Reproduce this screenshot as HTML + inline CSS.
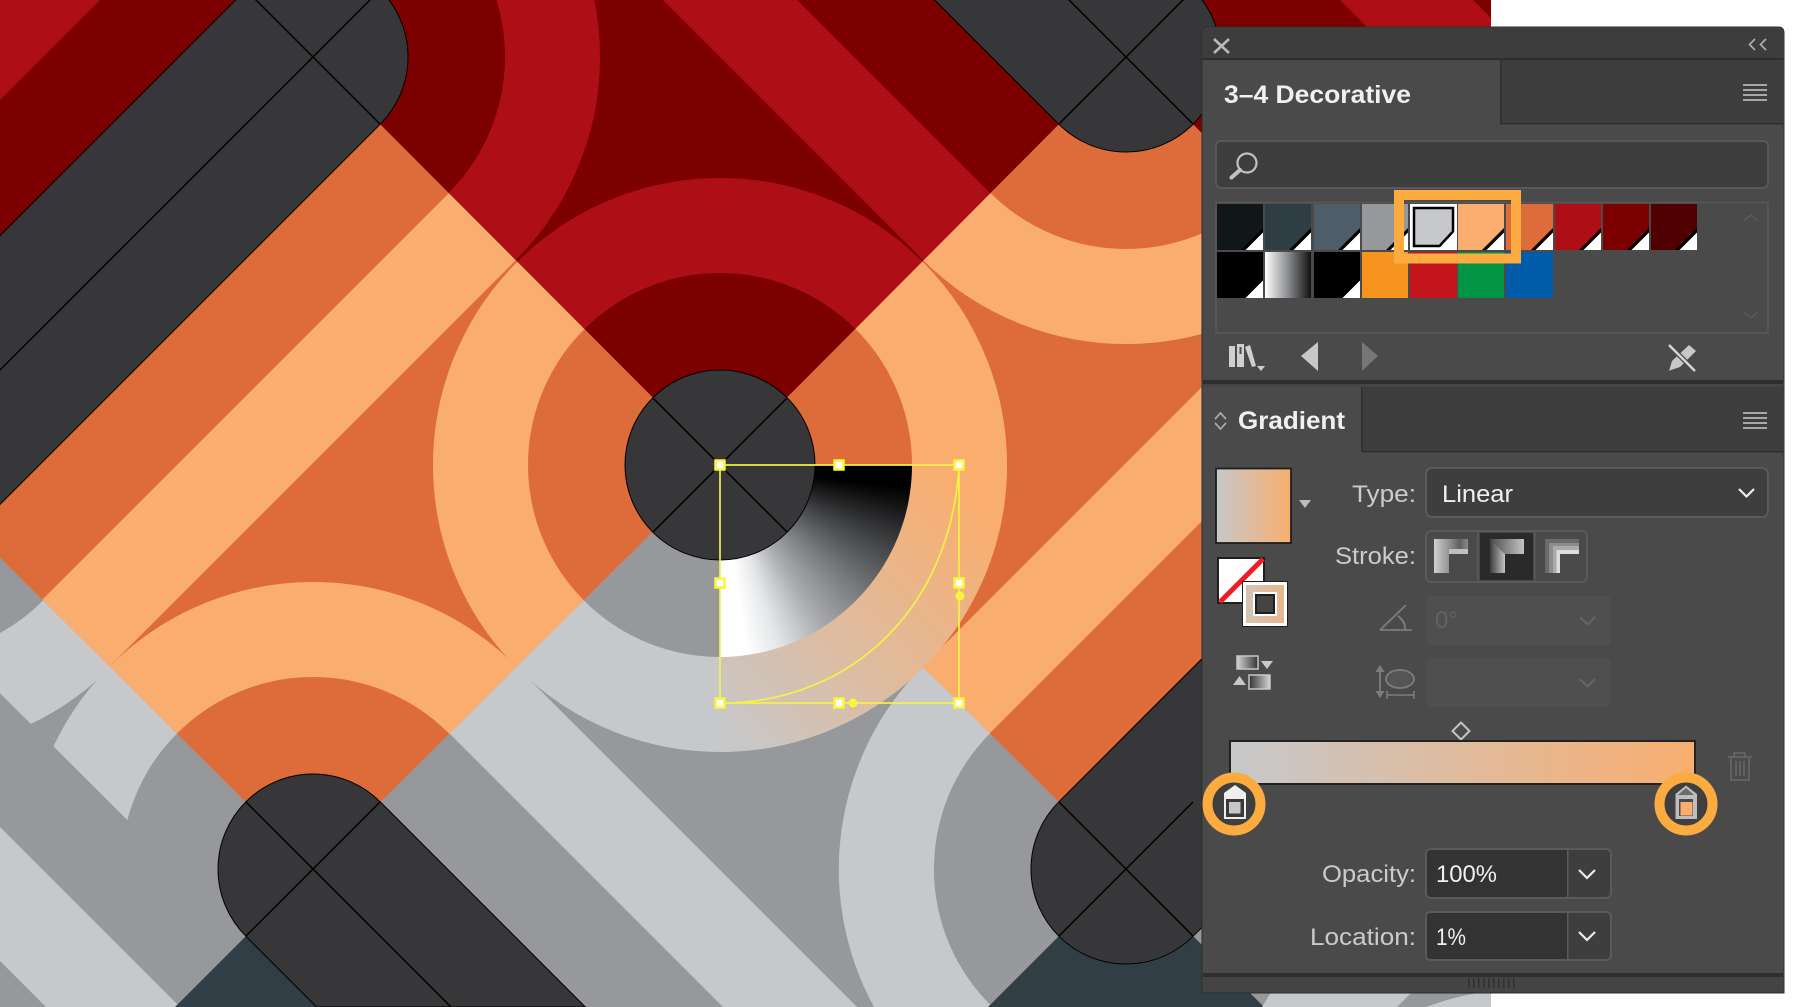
<!DOCTYPE html>
<html>
<head>
<meta charset="utf-8">
<title>Gradient panel</title>
<style>
html,body{margin:0;padding:0;background:#fff;width:1800px;height:1007px;overflow:hidden}
svg{position:absolute;left:0;top:0;display:block}
#sector{position:absolute;left:720px;top:465px;width:192px;height:192px;
background:conic-gradient(from 90deg at 0 0,#000 0deg,#000 7deg,#3c3d3f 24deg,#77797c 42deg,#a9abae 58deg,#e4e6e8 72deg,#fff 82deg,#fff 90deg);
clip-path:circle(192px at 0 0)}
text{font-family:"Liberation Sans",sans-serif}
</style>
</head>
<body>
<svg width="1491" height="1007" viewBox="0 0 1491 1007" style="background:#96989b">
<defs>
<clipPath id="cTop"><polygon points="313,57 720,465 1126,57 720,-349"/></clipPath>
<clipPath id="cLeft"><polygon points="313,57 720,465 313,869 -93,465"/></clipPath>
<clipPath id="cRight"><polygon points="1126,57 720,465 1126,869 1532,465"/></clipPath>
<clipPath id="cBot"><polygon points="720,465 1126,869 988,1007 451,1007 313,869"/></clipPath>
<clipPath id="cBL"><polygon points="-93,465 313,869 245,937 -161,533"/></clipPath>
<clipPath id="cQuad"><rect x="720" y="465" width="400" height="400"/></clipPath>
<linearGradient id="ringG" gradientUnits="userSpaceOnUse" x1="725" y1="750" x2="985" y2="520">
<stop offset="0" stop-color="#c6c8cb"/><stop offset="1" stop-color="#f9ae6f"/></linearGradient>
</defs>
<!-- red zone -->
<polygon points="-93,465 313,57 720,465 1126,57 1532,465 1532,-400 -93,-400" fill="#7c0000"/>
<polygon points="0,0 100,0 0,100" fill="#ae0e16"/>
<polygon points="1340,0 1473,0 1500,27 1500,30 1370,30" fill="#ae0e16"/>
<g clip-path="url(#cTop)" fill="none" stroke="#ae0e16" stroke-width="95">
<circle cx="720" cy="465" r="239.5"/>
<circle cx="313" cy="57" r="239.5"/>
</g>
<g clip-path="url(#cTop)"><polygon points="263,-400 397,-400 1397,600 1263,600" fill="#ae0e16"/></g>
<!-- left orange -->
<polygon points="313,57 720,465 313,869 -93,465" fill="#de6c3b"/>
<g clip-path="url(#cLeft)">
<g fill="none" stroke="#f9ae6f" stroke-width="95">
<circle cx="720" cy="465" r="239.5"/>
<path d="M73.500 869A239.500 239.500 0 0 1 552.500 869"/>
</g>
<polygon points="742,-100 876,-100 -124,900 -258,900" fill="#f9ae6f"/>
</g>
<!-- right orange -->
<polygon points="1126,57 720,465 1126,869 1532,465" fill="#de6c3b"/>
<g clip-path="url(#cRight)">
<g fill="none" stroke="#f9ae6f" stroke-width="95">
<circle cx="720" cy="465" r="239.5"/>
<circle cx="1126" cy="57" r="239.5"/>
</g>
<polygon points="1689,-100 1823,-100 823,900 689,900" fill="#f9ae6f"/>
</g>
<!-- bottom gray -->
<g clip-path="url(#cBot)">
<circle cx="720" cy="465" r="239.5" fill="none" stroke="#c6c8cb" stroke-width="95"/>
<path d="M923.100 666.100A287 287 0 0 0 874 1007L992.500 1007A192 192 0 0 1 990.200 733.200Z" fill="#c6c8cb"/>
<polygon points="216,500 350,500 857,1007 723,1007" fill="#c6c8cb"/>
</g>
<!-- bottom-left gray tile -->
<g clip-path="url(#cBL)" fill="none" stroke="#c6c8cb" stroke-width="95">
<circle cx="-93" cy="465" r="239.5"/>
<path d="M73.500 869A239.500 239.500 0 0 1 552.500 869"/>
</g>
<polygon points="0,827 180,1007 46,1007 0,961" fill="#c6c8cb"/>
<!-- teal -->
<polygon points="313,869 175,1007 451,1007" fill="#313e45"/>
<polygon points="1126,869 988,1007 1264,1007" fill="#313e45"/>
<!-- bottom right tile -->
<polygon points="1262,1007 1268,997 1271,993 1414,990 1397,1007" fill="#c6c8cb"/>
<path d="M1426 1007A287 287 0 0 1 1491 991L1491 1007Z" fill="#c6c8cb"/>
<!-- gradient ring -->
<g clip-path="url(#cQuad)"><circle cx="720" cy="465" r="239.5" fill="none" stroke="url(#ringG)" stroke-width="95"/></g>
</svg>
<div id="sector"></div>
<svg width="1800" height="1007" viewBox="0 0 1800 1007">
<defs>
<linearGradient id="pg" x1="0" x2="1" y1="0" y2="0"><stop offset="0" stop-color="#c6c8cb"/><stop offset="1" stop-color="#f9ae6f"/></linearGradient>
<linearGradient id="pb" x1="0" x2="1" y1="0" y2="0"><stop offset="0" stop-color="#d3c5b8"/><stop offset="1" stop-color="#e8b78c"/></linearGradient>
<linearGradient id="wb" x1="0" x2="1" y1="0" y2="0"><stop offset="0" stop-color="#fff"/><stop offset=".5" stop-color="#8a8c8f"/><stop offset="1" stop-color="#111"/></linearGradient>
<linearGradient id="ic1" x1="0" x2="1" y1="0" y2="0"><stop offset="0" stop-color="#cfcfcf"/><stop offset=".4" stop-color="#989898"/><stop offset=".75" stop-color="#606060"/><stop offset="1" stop-color="#8a8a8a"/></linearGradient>
<linearGradient id="ic2a" x1="0" x2="1" y1="0" y2="0"><stop offset="0" stop-color="#3c3c3c"/><stop offset="1" stop-color="#c4c4c4"/></linearGradient>
<linearGradient id="ic2b" x1="0" x2="1" y1="0" y2="0"><stop offset="0" stop-color="#4a4a4a"/><stop offset="1" stop-color="#c4c4c4"/></linearGradient>
<linearGradient id="rv" x1="0" x2="1" y1="0" y2="0"><stop offset="0" stop-color="#d5d5d5"/><stop offset="1" stop-color="#333"/></linearGradient>
<linearGradient id="rv2" x1="0" x2="1" y1="0" y2="0"><stop offset="0" stop-color="#333"/><stop offset="1" stop-color="#d5d5d5"/></linearGradient>
<g id="cn"><path d="M-22 0L0-22V0Z" fill="#000"/><path d="M-17.500 0L0-17.500V0Z" fill="#fff"/></g>
<g id="ham" fill="#a8a8a8"><rect x="0" y="0" width="24" height="2"/><rect x="0" y="5" width="24" height="2"/><rect x="0" y="10" width="24" height="2"/><rect x="0" y="15" width="24" height="2"/></g>
</defs>

<!-- capsules -->
<g fill="#373739" stroke="#000" stroke-width="1">
<path d="M245.820-10.180A95 95 0 0 1 380.180 124.180L-220 724.360L-354.360 590Z"/>
<path d="M1058.820 124.180A95 95 0 0 0 1193.180-10.180L893-310.360L758.640-176Z"/>
<path d="M380.180 801.820A95 95 0 0 0 245.820 936.180L316.640 1007L585.360 1007Z"/>
<path d="M1058.820 801.820A95 95 0 0 0 1193.180 936.180L1493.360 636L1359 501.640Z"/>
<circle cx="720" cy="465" r="95"/>
</g>
<g stroke="#000" stroke-width="1.500" fill="none">
<path d="M653 398L787 532M787 398L653 532"/>
<path d="M246-10L380 124M380-10L-20 390"/>
<path d="M1059 124L1193-10M1193 124L1059-10"/>
<path d="M380 802L246 936M246 802L451 1007"/>
<path d="M1059 802L1193 936M1059 936L1193 802"/>
</g>

<!-- selection -->
<g fill="none" stroke="#f5f246" stroke-width="1.700">
<rect x="720" y="465" width="239" height="238"/>
<path d="M959 467C950 610 850 700 728 703"/>
</g>
<g fill="#fff" stroke="#f7f53c" stroke-width="2.500">
<rect x="715.500" y="460.500" width="9" height="9"/><rect x="834.500" y="460.500" width="9" height="9"/><rect x="954.500" y="460.500" width="9" height="9"/>
<rect x="715.500" y="578.500" width="9" height="9"/><rect x="954.500" y="578.500" width="9" height="9"/>
<rect x="715.500" y="698.500" width="9" height="9"/><rect x="834.500" y="698.500" width="9" height="9"/><rect x="954.500" y="698.500" width="9" height="9"/>
</g>
<circle cx="960" cy="596" r="4.500" fill="#f7f53c"/><circle cx="853" cy="703" r="4.500" fill="#f7f53c"/>

<!-- panel -->
<path d="M1208 27H1778Q1784 27 1784 33V993H1202V33Q1202 27 1208 27Z" fill="#4a4a4a" stroke="#2c2c2c" stroke-width="1"/>
<path d="M1208 28H1778Q1783 28 1783 33V59H1203V33Q1203 28 1208 28Z" fill="#3d3d3d"/>
<rect x="1203" y="58" width="580" height="2" fill="#2e2e2e"/>
<rect x="1500" y="60" width="283" height="64" fill="#3d3d3d"/>
<rect x="1500" y="60" width="1.500" height="64" fill="#2e2e2e"/>
<rect x="1500" y="123" width="283" height="1.500" fill="#2e2e2e"/>
<path d="M1214 39L1229 53M1229 39L1214 53" stroke="#b9b9b9" stroke-width="2.600" fill="none"/>
<path d="M1755 39L1749.500 44.500L1755 50M1766 39L1760.500 44.500L1766 50" stroke="#b0b0b0" stroke-width="1.600" fill="none"/>
<text x="1224" y="103" font-size="25" font-weight="700" fill="#f0f0f0" textLength="187" lengthAdjust="spacingAndGlyphs">3–4 Decorative</text>
<use href="#ham" x="1743" y="84"/>

<!-- search -->
<rect x="1216" y="141" width="552" height="47" rx="5" fill="#3e3e3e" stroke="#585858" stroke-width="2"/>
<circle cx="1247" cy="163" r="9.500" fill="none" stroke="#c2c2c2" stroke-width="2.200"/>
<path d="M1240 170L1231.500 177.500" stroke="#c2c2c2" stroke-width="4" stroke-linecap="round"/>

<!-- swatches -->
<rect x="1216" y="202.500" width="552" height="130.500" fill="none" stroke="#575757" stroke-width="1.500"/>
<path d="M1744 221L1751 215L1758 221M1744 312L1751 318L1758 312" fill="none" stroke="#5a5a5a" stroke-width="1.500"/>
<g>
<rect x="1217" y="204" width="46" height="46" fill="#111619"/><use href="#cn" x="1263" y="250"/>
<rect x="1265" y="204" width="46" height="46" fill="#2f3d44"/><use href="#cn" x="1311" y="250"/>
<rect x="1314" y="204" width="46" height="46" fill="#4f5d68"/><use href="#cn" x="1360" y="250"/>
<rect x="1362" y="204" width="46" height="46" fill="#96989b"/><use href="#cn" x="1408" y="250"/>
<rect x="1410" y="204" width="47" height="46" fill="#fff"/>
<path d="M1414 208H1453V231.500L1439.500 246H1414Z" fill="#c6c8cb" stroke="#000" stroke-width="2.500"/>
<rect x="1458" y="204" width="46" height="46" fill="#f9ae6f"/><use href="#cn" x="1504" y="250"/>
<rect x="1506" y="204" width="47" height="46" fill="#de6c3b"/><use href="#cn" x="1553" y="250"/>
<rect x="1555" y="204" width="46" height="46" fill="#ae0e16"/><use href="#cn" x="1601" y="250"/>
<rect x="1603" y="204" width="46" height="46" fill="#7c0000"/><use href="#cn" x="1649" y="250"/>
<rect x="1651" y="204" width="46" height="46" fill="#500000"/><use href="#cn" x="1697" y="250"/>
<rect x="1217" y="252" width="46" height="46" fill="#000"/><path d="M1263 298h-17.500L1263 280.500Z" fill="#fff"/>
<rect x="1265" y="252" width="46" height="46" fill="url(#wb)"/>
<rect x="1314" y="252" width="46" height="46" fill="#000"/><path d="M1360 298h-17.500L1360 280.500Z" fill="#fff"/>
<rect x="1362" y="252" width="46" height="46" fill="#f7941d"/>
<rect x="1410" y="252" width="47" height="46" fill="#c4161c"/>
<rect x="1458" y="252" width="46" height="46" fill="#009444"/>
<rect x="1506" y="252" width="47" height="46" fill="#005ba8"/>
</g>
<rect x="1399" y="195" width="117" height="63.500" fill="none" stroke="#fbab3f" stroke-width="10"/>

<!-- swatch toolbar -->
<g fill="#cfcfcf">
<rect x="1229" y="346" width="6" height="21"/>
<path d="M1237 344H1244V367H1237ZM1239.500 347V354H1241.500V347Z" fill-rule="evenodd"/>
<path d="M1245 347L1250 345L1256 366L1252 367Z"/>
<path d="M1257 366H1265L1261 371Z"/>
<path d="M1301 356L1318 342V371Z" fill="#c8c8c8"/>
<path d="M1362 342L1378 356L1362 371Z" fill="#767676"/>
</g>
<g>
<path d="M1689 345L1696 351L1680 367L1671 370L1669 371L1672 361Z" fill="#c8c8c8"/>
<path d="M1670 346L1694 370" stroke="#4a4a4a" stroke-width="5"/>
<path d="M1669 345L1695 371" stroke="#d6d6d6" stroke-width="2.400"/>
</g>
<rect x="1203" y="380" width="580" height="4" fill="#2e2e2e"/>
<rect x="1203" y="384" width="580" height="3" fill="#454545"/>

<!-- gradient tab -->
<rect x="1362" y="387" width="421" height="65" fill="#3d3d3d"/>
<rect x="1361" y="387" width="1.500" height="65" fill="#2e2e2e"/>
<rect x="1362" y="451" width="421" height="1.500" fill="#2e2e2e"/>
<path d="M1215 419L1220.500 413L1226 419M1215 423L1220.500 429L1226 423" fill="none" stroke="#aaa" stroke-width="1.700"/>
<text x="1238" y="429" font-size="25" font-weight="700" fill="#f0f0f0" textLength="107" lengthAdjust="spacingAndGlyphs">Gradient</text>
<use href="#ham" x="1743" y="412"/>

<rect x="1216" y="468.500" width="75" height="74.500" fill="url(#pg)" stroke="#1e1e1e" stroke-width="1.800"/>
<path d="M1299 500H1311L1305 508Z" fill="#bdbdbd"/>
<rect x="1218" y="558" width="46" height="45" fill="#fff" stroke="#1e1e1e" stroke-width="2"/>
<path d="M1220 602L1263 559" stroke="#ee1c25" stroke-width="5"/>
<rect x="1243" y="582" width="44" height="44" fill="#1e1e1e" stroke="#1e1e1e" stroke-width="2"/>
<rect x="1244.500" y="583.500" width="41" height="41" fill="url(#pb)" stroke="#fff" stroke-width="3"/>
<rect x="1254.500" y="593.500" width="21" height="21" fill="#444" stroke="#fff" stroke-width="3"/>
<rect x="1256" y="595" width="18" height="18" fill="#444" stroke="#1e1e1e" stroke-width="2"/>
<rect x="1237" y="656" width="21" height="13" fill="url(#rv)" stroke="#c8c8c8" stroke-width="1.500"/>
<path d="M1261 661H1273L1267 669Z" fill="#c8c8c8"/>
<path d="M1233 685H1246L1239.500 676Z" fill="#c8c8c8"/>
<rect x="1249" y="675" width="21" height="14" fill="url(#rv2)" stroke="#c8c8c8" stroke-width="1.500"/>

<g fill="#cbcbcb" font-size="24">
<text x="1352" y="502" textLength="64" lengthAdjust="spacingAndGlyphs">Type:</text>
<text x="1335" y="564" textLength="81" lengthAdjust="spacingAndGlyphs">Stroke:</text>
<text x="1322" y="882" textLength="94" lengthAdjust="spacingAndGlyphs">Opacity:</text>
<text x="1310" y="945" textLength="106" lengthAdjust="spacingAndGlyphs">Location:</text>
</g>

<rect x="1426" y="468" width="342" height="49" rx="6" fill="#3e3e3e" stroke="#5a5a5a" stroke-width="2"/>
<text x="1442" y="502" font-size="24" fill="#f0f0f0" textLength="71" lengthAdjust="spacingAndGlyphs">Linear</text>
<path d="M1739 489L1746.500 496.500L1754 489" fill="none" stroke="#eee" stroke-width="2.200"/>

<!-- stroke buttons -->
<rect x="1426" y="531" width="161" height="51" rx="5" fill="#4a4a4a" stroke="#5a5a5a" stroke-width="2"/>
<rect x="1477" y="532" width="1.500" height="49" fill="#5a5a5a"/><rect x="1534" y="532" width="1.500" height="49" fill="#5a5a5a"/>
<rect x="1480" y="533" width="53" height="47" fill="#2a2a2a"/>
<path d="M1434 539H1468V554H1449V573H1434Z" fill="url(#ic1)"/>
<path d="M1449 549H1468V554H1449Z" fill="#c0c0c0"/>
<path d="M1490 539L1505 554V573H1490Z" fill="url(#ic2a)"/>
<path d="M1490 539H1524V554H1505Z" fill="url(#ic2b)"/>
<path d="M1545 539H1579V554H1560V573H1545Z" fill="#6a6a6a"/>
<path d="M1549 543H1579V554H1560V573H1549Z" fill="#8c8c8c"/>
<path d="M1553 546H1579V554H1560V573H1553Z" fill="#aaa"/>
<path d="M1556.500 550H1579V554H1560V573H1556.500Z" fill="#ddd"/>

<!-- disabled -->
<rect x="1426" y="596" width="185" height="49" rx="5" fill="#4f4f4f"/>
<rect x="1426" y="658" width="185" height="49" rx="5" fill="#4f4f4f"/>
<text x="1435" y="628" font-size="24" fill="#626262" textLength="23" lengthAdjust="spacingAndGlyphs">0°</text>
<path d="M1580 617L1587.500 624.500L1595 617M1580 679L1587.500 686.500L1595 679" fill="none" stroke="#686868" stroke-width="1.800"/>
<path d="M1380 630H1412M1380 630L1406 605M1398 616Q1406 622 1405 630" fill="none" stroke="#7d7d7d" stroke-width="1.800"/>
<ellipse cx="1400" cy="679" rx="14" ry="9" fill="#555" stroke="#7d7d7d" stroke-width="1.800"/>
<path d="M1380 670V693" stroke="#7d7d7d" stroke-width="1.800"/>
<path d="M1375.500 672L1380 665L1384.500 672ZM1375.500 691L1380 698L1384.500 691Z" fill="#7d7d7d"/>
<path d="M1387 695H1414M1387 691V699M1414 691V699" stroke="#7d7d7d" stroke-width="1.500" fill="none"/>

<!-- slider -->
<path d="M1461 722.500L1469.500 731L1461 739.500L1452.500 731Z" fill="none" stroke="#c4c4c4" stroke-width="2"/>
<rect x="1230" y="741" width="465" height="43" fill="url(#pg)" stroke="#222" stroke-width="2"/>
<g fill="none" stroke="#696969" stroke-width="1.500">
<path d="M1728 757H1752M1734 757V753H1745V757M1731 758V780H1749V758M1736 761V776M1740 761V776M1744 761V776"/>
</g>
<circle cx="1234" cy="804" r="26.500" fill="#3f3f3f" stroke="#fbab3f" stroke-width="10"/>
<circle cx="1686" cy="804" r="26.500" fill="#3f3f3f" stroke="#fbab3f" stroke-width="10"/>
<path d="M1235 785L1246 793V819H1224V793Z" fill="#efefef"/>
<rect x="1226" y="799" width="18" height="18" fill="#3a3a3a"/>
<rect x="1229" y="802" width="11.500" height="11.500" fill="#c6c8cb"/>
<path d="M1686 785.500L1697 794V819H1675.500V794Z" fill="#bdbdbd"/>
<path d="M1686 788L1694 795H1678Z" fill="#6a6a6a"/>
<rect x="1679" y="799" width="14" height="17" fill="#4a4a4a"/>
<rect x="1680.500" y="802" width="12" height="13.500" fill="#f9ae6f"/>

<!-- fields -->
<rect x="1426" y="849" width="185" height="49" rx="5" fill="#3e3e3e" stroke="#5a5a5a" stroke-width="2"/>
<path d="M1431 850H1567V897H1431Q1427 897 1427 893V854Q1427 850 1431 850Z" fill="#333"/>
<rect x="1567" y="850" width="1.500" height="47" fill="#5a5a5a"/>
<text x="1436" y="882" font-size="24" fill="#f0f0f0" textLength="61" lengthAdjust="spacingAndGlyphs">100%</text>
<path d="M1579 870L1587 878L1595 870" fill="none" stroke="#eee" stroke-width="2.200"/>
<rect x="1426" y="912" width="185" height="48" rx="5" fill="#3e3e3e" stroke="#5a5a5a" stroke-width="2"/>
<path d="M1431 913H1567V959H1431Q1427 959 1427 955V917Q1427 913 1431 913Z" fill="#333"/>
<rect x="1567" y="913" width="1.500" height="46" fill="#5a5a5a"/>
<text x="1436" y="945" font-size="24" fill="#f0f0f0" textLength="30" lengthAdjust="spacingAndGlyphs">1%</text>
<path d="M1579 932L1587 940L1595 932" fill="none" stroke="#eee" stroke-width="2.200"/>

<!-- footer -->
<rect x="1203" y="973" width="580" height="4" fill="#2e2e2e"/>
<rect x="1203" y="977" width="580" height="15.500" fill="#444"/>
<g fill="#303030">
<rect x="1468" y="978" width="1.500" height="10"/><rect x="1473" y="978" width="1.500" height="10"/><rect x="1478" y="978" width="1.500" height="10"/><rect x="1483" y="978" width="1.500" height="10"/><rect x="1488" y="978" width="1.500" height="10"/><rect x="1493" y="978" width="1.500" height="10"/><rect x="1498" y="978" width="1.500" height="10"/><rect x="1503" y="978" width="1.500" height="10"/><rect x="1508" y="978" width="1.500" height="10"/><rect x="1513" y="978" width="1.500" height="10"/>
</g>
</svg>
</body>
</html>
